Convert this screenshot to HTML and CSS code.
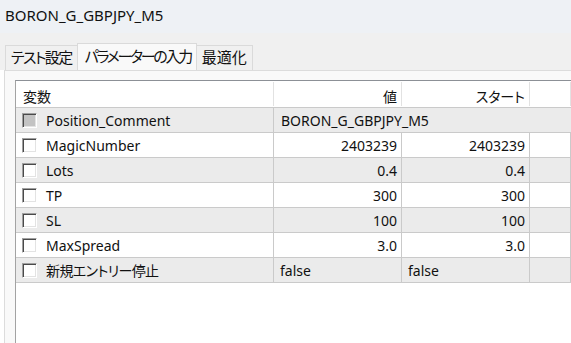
FILE: index.html
```html
<!DOCTYPE html>
<html lang="ja">
<head>
<meta charset="utf-8">
<link rel="stylesheet" href="styles.css">
</head>
<body>
<div class="window">
  <div class="titlebar">BORON_G_GBPJPY_M5</div>
  <div class="tabstrip">
    <div class="tab kana">テスト設定</div>
    <div class="tab kana active">パラメーターの入力</div>
    <div class="tab">最適化</div>
  </div>
  <div class="panel">
    <div class="grid">
      <div class="row head">
        <div class="cell">変数</div>
        <div class="cell num">値</div>
        <div class="cell num">スタート</div>
        <div class="cell"></div>
      </div>
      <div class="row alt">
        <div class="cell"><span class="cb disabled"></span><span>Position_Comment</span></div>
        <div class="cell span3">BORON_G_GBPJPY_M5</div>
      </div>
      <div class="row">
        <div class="cell"><span class="cb"></span><span>MagicNumber</span></div>
        <div class="cell num">2403239</div>
        <div class="cell num">2403239</div>
        <div class="cell"></div>
      </div>
      <div class="row alt">
        <div class="cell"><span class="cb"></span><span>Lots</span></div>
        <div class="cell num">0.4</div>
        <div class="cell num">0.4</div>
        <div class="cell"></div>
      </div>
      <div class="row">
        <div class="cell"><span class="cb"></span><span>TP</span></div>
        <div class="cell num">300</div>
        <div class="cell num">300</div>
        <div class="cell"></div>
      </div>
      <div class="row alt">
        <div class="cell"><span class="cb"></span><span>SL</span></div>
        <div class="cell num">100</div>
        <div class="cell num">100</div>
        <div class="cell"></div>
      </div>
      <div class="row">
        <div class="cell"><span class="cb"></span><span>MaxSpread</span></div>
        <div class="cell num">3.0</div>
        <div class="cell num">3.0</div>
        <div class="cell"></div>
      </div>
      <div class="row alt">
        <div class="cell"><span class="cb"></span><span class="jp">新規エントリー停止</span></div>
        <div class="cell">false</div>
        <div class="cell">false</div>
        <div class="cell"></div>
      </div>
    </div>
  </div>
</div>
</body>
</html>
```

FILE: styles.css
```css
html, body {
  margin: 0;
  padding: 0;
  width: 571px;
  height: 343px;
  overflow: hidden;
}
body {
  font-family: "Noto Sans", "Noto Sans CJK JP", sans-serif;
  font-size: 14px;
  color: #111;
  font-feature-settings: "palt";
}
.window {
  display: flex;
  flex-direction: column;
  height: 343px;
}
.titlebar {
  height: 33px;
  box-sizing: border-box;
  background: #eef1f5;
  padding: 4px 0 0 5px;
  font-size: 15px;
  line-height: 22px;
}
.tabstrip {
  height: 37px;
  box-sizing: border-box;
  background: #f0f0f0;
  display: flex;
  align-items: flex-end;
  padding-left: 5px;
}
.tab {
  height: 25px;
  box-sizing: border-box;
  border: 1px solid #dadada;
  border-bottom: none;
  padding: 0 5px;
  line-height: 23px;
  font-size: 15px;
  background: #f0f0f0;
  white-space: nowrap;
}
.tab.kana {
  letter-spacing: -1.6px;
}
.tab + .tab {
  margin-left: -1px;
}
.tab.active {
  height: 27px;
  line-height: 25px;
  background: #f9f9f9;
  padding: 0 5px 0 7px;
  letter-spacing: -2.3px;
}
.panel {
  flex: 1;
  background: #f9f9f9;
  border-top: 1px solid #dcdcdc;
  border-left: 1px solid #dcdcdc;
  margin-left: 4px;
  padding: 9px 0 0 10px;
  display: flex;
}
.grid {
  flex: 1;
  width: 600px;
  background: #fff;
  border-top: 1px solid #8c9096;
  border-left: 1px solid #a3a3a3;
}
.row {
  display: grid;
  grid-template-columns: 258px 128px 128px 1fr;
  height: 25px;
  box-sizing: border-box;
  border-bottom: 1px solid #cacaca;
}
.row.alt {
  background: #ebebeb;
}
.row.head {
  height: 27px;
  background: #fff;
}
.cell {
  box-sizing: border-box;
  border-right: 1px solid #cacaca;
  padding: 0 6px;
  display: flex;
  align-items: center;
  white-space: nowrap;
  overflow: hidden;
}
.cell.span3 {
  grid-column: 2 / span 3;
  border-right: none;
  padding-left: 7px;
}
.row.head .cell {
  border-right-color: #e2e2e2;
  padding-top: 3px;
  margin: 1px 0;
}
.row.head .cell:first-child {
  padding-left: 7px;
}
.cell.num {
  justify-content: flex-end;
  padding-right: 4px;
}
.jp {
  letter-spacing: -0.6px;
}
.cb {
  width: 13px;
  height: 13px;
  flex: none;
  margin-right: 9px;
  background: #fff;
  border-top: 1px solid #a0a0a0;
  border-left: 1px solid #a0a0a0;
  border-right: 1px solid #fff;
  border-bottom: 1px solid #fff;
  box-shadow: inset 1px 1px 0 #4a4a4a, inset -1px -1px 0 #e3e3e3;
}
.cb.disabled {
  background: #c3c3c3;
}
```
